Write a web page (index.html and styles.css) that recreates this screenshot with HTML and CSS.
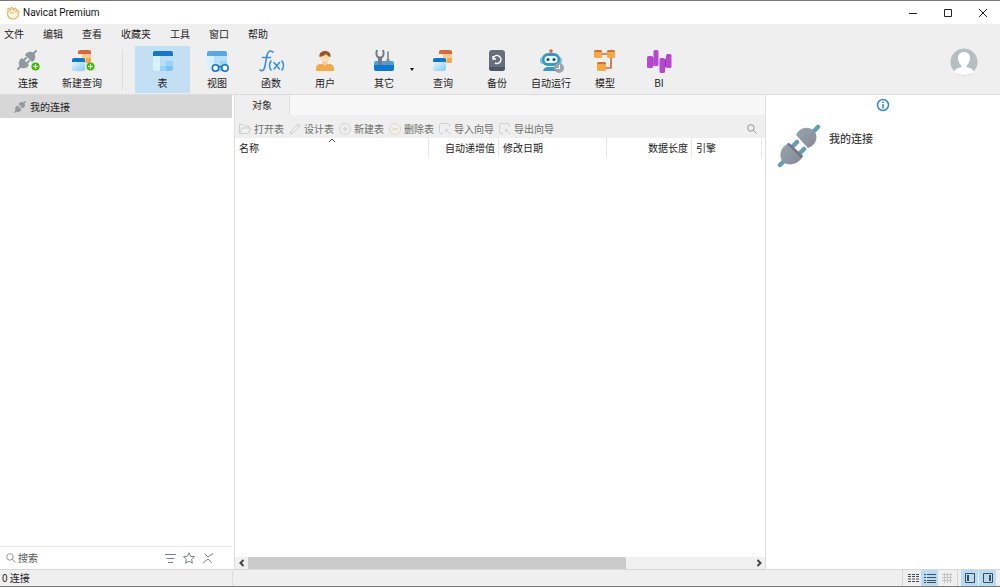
FILE: index.html
```html
<!DOCTYPE html>
<html lang="zh-CN">
<head>
<meta charset="utf-8">
<title>Navicat Premium</title>
<link rel="stylesheet" href="styles.css">
</head>
<body>
<svg class="defs" aria-hidden="true">
  <defs>
    <linearGradient id="pale" x1="0" y1="0" x2="1" y2="1"><stop offset="0" stop-color="#e6f5ff"/><stop offset="1" stop-color="#85c9fa"/></linearGradient>
    <linearGradient id="slate" x1="0" y1="0" x2="1" y2="1"><stop offset="0" stop-color="#98a6b0"/><stop offset="1" stop-color="#858796"/></linearGradient>
    <symbol id="plug" viewBox="0 0 44 44">
      <path d="M3 41L9 35M41 3L35 9M20 18L15 23M27 25L22 30" stroke="currentColor" stroke-width="4.500" stroke-linecap="round"/>
      <path d="M12 19L26 32C22 40 12 43 6 38C1 32 3 23 12 19Z" fill="url(#slate)"/>
      <path d="M12 19L26 32L24 34L10 20Z" fill="#777483"/>
      <path d="M19 11L31 24C39 21 42 13 37 7C31 1 22 4 19 11Z" fill="url(#slate)"/>
    </symbol>
    <symbol id="plug-flat" viewBox="0 0 20 20">
      <path d="M1 19L4 16M19 1L16 4M9 8L7 10M12 11L10 13" stroke="#8f999e" stroke-width="2" stroke-linecap="round"/>
      <path d="M5 8L12 15C10 19 5 19 3 17C1 14 1.500 10 5 8ZM8 5L15 12C19 10 19 6 17 3C14 1 10 1.500 8 5Z" fill="#8f999e"/>
    </symbol>
    <symbol id="plus" viewBox="0 0 10 10">
      <circle cx="5" cy="5" r="4.500" fill="#40bb08"/><path d="M5 2.500V7.500M2.500 5H7.500" stroke="#fff" stroke-width="1.300"/>
    </symbol>
    <symbol id="query" viewBox="0 0 30 26">
      <path d="M11 4a2 2 0 0 1 2-2h9a2 2 0 0 1 2 2v2H11z" fill="#d9683a"/>
      <path d="M15 6h9v7a2 2 0 0 1-2 2h-7z" fill="#f8ca93"/><path d="M19 10h5v3a2 2 0 0 1-2 2h-3z" fill="#efa94f"/>
      <path d="M5 12a2 2 0 0 1 2-2h9a2 2 0 0 1 2 2v2H5z" fill="#0d78c9"/>
      <path d="M5 14h13v7a2 2 0 0 1-2 2H7a2 2 0 0 1-2-2z" fill="url(#pale)"/>
    </symbol>
    <symbol id="table-body" viewBox="0 0 30 26">
      <path d="M5 7h20v13a3 3 0 0 1-3 3H8a3 3 0 0 1-3-3z" fill="#d9f0fe"/>
      <path d="M12 8h13v12a3 3 0 0 1-3 3h-4v-5h-6z" fill="#b9e0fb"/>
      <path d="M18 13h7v7a3 3 0 0 1-3 3H12v-5h6z" fill="#97d2f9"/>
      <path d="M18 18h7v2a3 3 0 0 1-3 3h-4z" fill="#79c3f7"/>
    </symbol>
    <symbol id="wizard" viewBox="0 0 12 12">
      <path d="M4 10.500H2a1.500 1.500 0 0 1-1.500-1.500V2A1.500 1.500 0 0 1 2 .5h7A1.500 1.500 0 0 1 10.500 2v2M6.500 6.500l5 5M6.500 9V6.500H9" fill="none" stroke="#cfd2d2"/>
    </symbol>
    <symbol id="search" viewBox="0 0 12 12">
      <circle cx="4.700" cy="4.700" r="3.900" fill="none" stroke="currentColor"/><path d="M7.500 7.500L11.500 11.500" stroke="currentColor"/>
    </symbol>
  </defs>
</svg>
<div class="window">
  <header class="titlebar">
    <svg class="logo" viewBox="0 0 14 14"><path d="M2.500 5.500C.5 7 1.500 12.300 6 13C10.500 13.500 13 10 12 7.500C11 5.500 9 6.500 7 7C5 7.500 4.500 5 2.500 5.500Z" fill="#fff8e9" stroke="#e9b45e" stroke-width="1.200"/><path d="M2.500 5.500C.5 2.500 3 1.500 4.500 4.800C4 .5 7 .3 7.500 4.800C8.500 1 11 1.500 10 5.300C12.500 3.500 13.500 5.500 12 7.500" fill="#fff8e9" stroke="#e9b45e" stroke-width="1.200"/></svg>
    <h1 class="title">Navicat Premium</h1>
    <div class="window-controls">
      <button class="control" aria-label="最小化"><svg viewBox="0 0 10 10"><path d="M1 5.500H9"/></svg></button>
      <button class="control" aria-label="最大化"><svg viewBox="0 0 10 10"><path d="M1.500 1.500H8.500V8.500H1.500Z"/></svg></button>
      <button class="control" aria-label="关闭"><svg viewBox="0 0 10 10"><path d="M1 1L9 9M9 1L1 9"/></svg></button>
    </div>
  </header>

  <div class="ribbon">
    <nav class="menu">
      <button>文件</button><button>编辑</button><button>查看</button><button>收藏夹</button><button>工具</button><button>窗口</button><button>帮助</button>
    </nav>
    <div class="toolbar">
      <button class="tool"><svg class="icon" viewBox="0 0 30 26"><use href="#plug-flat" x="4" y="2" width="20" height="20"/><use href="#plus" x="18" y="14" width="9" height="9"/></svg>连接</button>
      <button class="tool"><svg class="icon" viewBox="0 0 30 26"><use href="#query" width="30" height="26"/><use href="#plus" x="19" y="14" width="9" height="9"/></svg>新建查询</button>
      <span class="divider"></span>
      <button class="tool active"><svg class="icon" viewBox="0 0 30 26"><use href="#table-body" width="30" height="26"/><path d="M5 5a2 2 0 0 1 2-2h16a2 2 0 0 1 2 2v3H5z" fill="#1378c8"/></svg>表</button>
      <button class="tool"><svg class="icon" viewBox="0 0 30 26"><use href="#table-body" width="30" height="26"/><path d="M5 5a2 2 0 0 1 2-2h16a2 2 0 0 1 2 2v3H5z" fill="#5ba6e4"/><g fill="#fff" stroke="#1475bf" stroke-width="1.500"><circle cx="13.500" cy="20" r="3.200"/><circle cx="23" cy="20" r="3.200"/><path d="M16.700 19q1.500-1 3 0"/></g></svg>视图</button>
      <button class="tool"><svg class="icon" viewBox="0 0 30 26"><g fill="none" stroke="#3b90df" stroke-width="1.600" stroke-linecap="round"><path d="M17 4C13.500 1.500 11.500 4 10.800 8L9 18C8.300 22 6.500 23.500 4 22M6.500 9.500H14.500"/><path d="M15 13q-3 4.500 0 9M26 13q3 4.500 0 9M18 14.500L23.500 21M23.500 14.500L18 21"/></g></svg>函数</button>
      <button class="tool"><svg class="icon" viewBox="0 0 30 26"><path d="M6 23v-2q0-5 5-5h8q5 0 5 5v2z" fill="#f4aa4b"/><path d="M12.500 12h5v4q-2.500 3-5 0z" fill="#f7cc98"/><circle cx="15" cy="9" r="5" fill="#ffdcb1"/><path d="M9.500 9C8 1 22 1 20.500 9C18 8.500 17 7 16 6C14 8 12 8 9.500 9Z" fill="#9b5520"/></svg>用户</button>
      <button class="tool split"><svg class="icon" viewBox="0 0 30 26"><path d="M5 15a2 2 0 0 1 2-2h16a2 2 0 0 1 2 2v4H5z" fill="#46a1e8"/><path d="M8 2C6.500 7 8 9 10 10V18M14 2c1.500 5 0 7-2 8V18" fill="none" stroke="#777b86" stroke-width="2"/><path d="M9 8.500h4V18H9.500z" fill="#777b86"/><path d="M19 3.500V12" stroke="#858993" stroke-width="1.700"/><path d="M17.500 11h3v7h-3z" fill="#858993"/><path d="M5 17h20v4a2 2 0 0 1-2 2H7a2 2 0 0 1-2-2z" fill="#0e78ca"/></svg>其它<span class="caret"></span></button>
      <button class="tool"><svg class="icon" viewBox="0 0 30 26"><use href="#query" width="30" height="26"/></svg>查询</button>
      <button class="tool"><svg class="icon" viewBox="0 0 30 26"><rect x="7" y="2" width="16" height="21" rx="3" fill="#686d7c"/><path d="M7 19h16v1a3 3 0 0 1-3 3H10a3 3 0 0 1-3-3z" fill="#505566"/><path d="M11.500 9.500A4 4 0 1 1 13 15M11 8v3h3" fill="none" stroke="#fff" stroke-width="1.500"/></svg>备份</button>
      <button class="tool"><svg class="icon" viewBox="0 0 30 26"><path d="M15 3v4" stroke="#d9683a" stroke-width="1.500"/><circle cx="15" cy="3" r="1.800" fill="#d9683a"/><rect x="4" y="9" width="22" height="7" rx="3" fill="#7bc3dd"/><rect x="6" y="5" width="18" height="13" rx="6" fill="#3999bd"/><rect x="8.500" y="8" width="13" height="7" rx="3.500" fill="#e9fbff"/><circle cx="12" cy="11.500" r="1.500" fill="#16476d"/><circle cx="18" cy="11.500" r="1.500" fill="#16476d"/><path d="M7 23q1-4 5-4h7q3 0 4 4z" fill="#3999bd"/><circle cx="23" cy="20" r="5" fill="#9da3aa"/><path d="M23.500 17v3.500h-3" fill="none" stroke="#fff"/></svg>自动运行</button>
      <button class="tool"><svg class="icon" viewBox="0 0 30 26"><path d="M11 6h10M21 8v12h-6" fill="none" stroke="#d86b38" stroke-width="1.700"/><g fill="#f4a944"><rect x="4" y="2" width="8" height="8" rx="1.500"/><rect x="17" y="2" width="8" height="8" rx="1.500"/><rect x="7" y="14" width="9" height="9" rx="1.500"/></g><path d="M4 4q0-2 2-2h4q2 0 2 2zM17 4q0-2 2-2h4q2 0 2 2zM7 16q0-2 2-2h5q2 0 2 2z" fill="#d86b38"/></svg>模型</button>
      <button class="tool"><svg class="icon" viewBox="0 0 30 26"><g fill="#b848d2"><rect x="3" y="8" width="6" height="12" rx="1.500"/><rect x="9.500" y="2" width="5" height="16" rx="1.500"/><rect x="15.500" y="10" width="5.500" height="15" rx="1.500"/><rect x="22" y="6" width="5.500" height="14" rx="1.500"/></g><path d="M8.500 9h1v9h-1zM21 11h1v8h-1z" fill="#9a34b5"/></svg>BI</button>
      <button class="avatar" aria-label="用户"><svg viewBox="0 0 28 28"><circle cx="14" cy="14" r="13.500" fill="#b5bfc0"/><path d="M14 4c-4 0-6.500 3-6 7c.3 2 1.500 5 3.500 7v1C8 20 5 21 4 23.500Q14 31 24 23.500C23 21 20 20 16.500 19v-1c2-2 3.200-5 3.500-7C20.500 7 18 4 14 4Z" fill="#fff"/></svg></button>
    </div>
  </div>

  <main class="workspace">
    <aside class="sidebar">
      <button class="connection"><svg class="plug-small"><use href="#plug-flat"/></svg>我的连接</button>
      <div class="search-row">
        <svg class="small-icon"><use href="#search"/></svg>
        <input class="search" type="text" placeholder="搜索" aria-label="搜索">
        <button class="mini" aria-label="筛选"><svg viewBox="0 0 12 12"><path d="M1 2.500H12M2.500 6.500H10.500M4 10.500H9"/></svg></button>
        <button class="mini" aria-label="收藏"><svg viewBox="0 0 12 12"><path d="M6 .8L7.600 4.300L11.500 4.700L8.600 7.300L9.400 11.200L6 9.200L2.600 11.200L3.400 7.300L.5 4.700L4.400 4.300Z"/></svg></button>
        <button class="mini" aria-label="折叠"><svg viewBox="0 0 12 12"><path d="M2.500 1.500L6 5L11 1.500M1 11L6 7L9.500 10.500"/></svg></button>
      </div>
    </aside>

    <section class="objects">
      <div class="tabs"><button class="tab">对象</button></div>
      <div class="actions">
        <button class="action"><svg viewBox="0 0 12 12"><path d="M.5 10.500V1.500H4L5.500 3H10V5M.5 10.500L3 5H11.500L9.500 10.500Z" fill="none" stroke="#cbcece"/></svg>打开表</button>
        <button class="action"><svg viewBox="0 0 12 12"><path d="M1 11L2 8L8.500 1.500Q10 .5 11 2L10.500 3.500L4 10ZM7.500 2.500L9.500 4.500" fill="none" stroke="#cbcece"/></svg>设计表</button>
        <button class="action"><svg viewBox="0 0 12 12"><path d="M6 3.500V8.500M3.500 6H8.500" stroke="#c9cdcd"/><circle cx="6" cy="6" r="5.500" fill="none" stroke="#cfd2d2"/></svg>新建表</button>
        <button class="action"><svg viewBox="0 0 12 12"><path d="M3.500 6H8.500" stroke="#dcc98e"/><circle cx="6" cy="6" r="5.500" fill="none" stroke="#e2d8b8"/></svg>删除表</button>
        <button class="action"><svg><use href="#wizard"/></svg>导入向导</button>
        <button class="action"><svg><use href="#wizard"/></svg>导出向导</button>
        <button class="find" aria-label="查找"><svg class="small-icon"><use href="#search"/></svg></button>
      </div>
      <div class="list">
        <table class="grid">
          <colgroup><col class="c-name"><col class="c-auto"><col class="c-date"><col class="c-size"><col class="c-engine"><col></colgroup>
          <thead><tr><th>名称<svg class="sort" viewBox="0 0 8 5"><path d="M1 4L4 1L7 4"/></svg></th><th class="num">自动递增值</th><th>修改日期</th><th class="num">数据长度</th><th>引擎</th><th class="filler"></th></tr></thead>
        </table>
      </div>
      <div class="scrollbar">
        <button aria-label="向左"><svg viewBox="0 0 8 8"><path d="M5.500 1L2.500 4L5.500 7"/></svg></button>
        <div class="track"><div class="thumb"></div></div>
        <button aria-label="向右"><svg viewBox="0 0 8 8"><path d="M2.500 1L5.500 4L2.500 7"/></svg></button>
      </div>
    </section>

    <aside class="info">
      <button class="info-tab" aria-label="信息"><svg viewBox="0 0 14 14"><circle cx="7" cy="7" r="5.500"/><path d="M7 6V10.500M7 3.500V5"/></svg></button>
      <div class="summary"><svg class="plug-large"><use href="#plug"/></svg><h2>我的连接</h2></div>
    </aside>
  </main>

  <footer class="status">
    <span class="count">0 连接</span>
    <div class="views">
      <button class="view" aria-label="列表"><svg viewBox="0 0 12 12"><path d="M1 2.500H12M1 4.500H12M1 7H12M1 9.500H12" stroke-dasharray="3 1"/></svg></button>
      <button class="view on" aria-label="详细信息"><svg viewBox="0 0 12 12"><path d="M0 2.500H2M0 5.500H2M0 8.500H2M0 10.500H2M3 2.500H12M3 5.500H12M3 8.500H12M3 10.500H12"/></svg></button>
      <button class="view faint" aria-label="ER 图表"><svg viewBox="0 0 12 12"><path d="M1 2.500H11M1 5.500H11M1 8.500H11M3.500 1V11M6.500 1V11M9.500 1V11"/></svg></button>
    </div>
    <div class="views panes">
      <button class="view on" aria-label="左窗格"><svg viewBox="0 0 12 12"><path d="M1.500 1.500H10.500V10.500H1.500Z"/><path d="M4 3V9" stroke-width="2"/></svg></button>
      <button class="view on" aria-label="右窗格"><svg viewBox="0 0 12 12"><path d="M1.500 1.500H10.500V10.500H1.500Z"/><path d="M8 3V9" stroke-width="2"/></svg></button>
    </div>
  </footer>
</div>
</body>
</html>
```
FILE: styles.css
```css
* { box-sizing: border-box; }
body {
  margin: 0;
  font: 10px/14px "Noto Sans CJK SC", sans-serif;
  color: #1c1c1c;
  background: #fff;
}
button, input {
  margin: 0;
  padding: 0;
  border: 0;
  background: none;
  font: inherit;
  color: inherit;
}
svg { display: block; flex: none; }
.defs { position: absolute; width: 0; height: 0; }
.window {
  display: flex;
  flex-direction: column;
  height: 100vh;
  border-top: 1px solid #777;
  border-bottom: 1px solid #777;
}

.titlebar { display: flex; align-items: center; height: 23px; padding-left: 6px; gap: 3px; }
.logo { width: 14px; height: 14px; }
.title { flex: 1; margin: 0; font: 10px/14px Roboto, sans-serif; color: #111; }
.window-controls { display: flex; }
.control { display: grid; place-items: center; width: 35px; height: 23px; }
.control svg { width: 10px; height: 10px; fill: none; stroke: #222; }

.ribbon { background: #efefef; border-bottom: 1px solid #dcdcdc; }
.menu { display: flex; gap: 19px; height: 20px; padding-left: 4px; }
.toolbar { display: flex; height: 50px; padding: 2px 22px 0 1px; }
.tool {
  display: flex;
  flex-direction: column;
  align-items: center;
  width: 54px;
  height: 47px;
  padding-top: 2px;
  gap: 2px;
}
.icon { width: 30px; height: 26px; }
.active { width: 55px; background: #c3dff4; }
.split { position: relative; width: 64px; }
.caret {
  position: absolute;
  right: 2px;
  top: 22px;
  border: 2px solid transparent;
  border-top: 3px solid #111;
}
.divider { width: 1px; height: 40px; margin: 4px 12px 0 13px; background: #dcdcdc; }
.avatar { align-self: flex-start; margin-left: auto; }
.avatar svg { width: 28px; height: 28px; margin-top: 2px; }

.workspace { display: flex; flex: 1; min-height: 0; }
.sidebar {
  display: flex;
  flex-direction: column;
  justify-content: space-between;
  width: 235px;
  padding-right: 2px;
  border-right: 1px solid #dedede;
}
.connection { display: flex; align-items: center; gap: 4px; height: 23px; padding-left: 14px; background: #d7d7d7; }
.plug-small { width: 12px; height: 12px; }
.search-row { display: flex; align-items: center; height: 23px; padding: 0 18px 0 6px; border-top: 1px solid #e6e6e6; }
.small-icon { width: 10px; height: 10px; color: #7b8385; }
.search { flex: 1; min-width: 0; margin-left: 2px; outline: 0; }
.search::placeholder { color: #555; opacity: 1; }
.mini { margin-left: 7px; }
.mini svg { width: 12px; height: 12px; fill: none; stroke: #748083; }

.objects { display: flex; flex: 1; flex-direction: column; min-width: 0; border-right: 1px solid #dedede; }
.tabs { height: 20px; background: #f7f7f7; }
.tab { width: 55px; height: 20px; background: #efefef; border-right: 1px solid #e2e2e2; }
.actions { display: flex; align-items: center; gap: 5px; height: 23px; padding: 4px 8px 0 4px; background: #efefef; }
.action { display: flex; align-items: center; gap: 3px; color: #6d706b; white-space: nowrap; }
.action svg { width: 12px; height: 12px; }
.find { margin-left: auto; }
.list { flex: 1; min-height: 0; overflow: hidden; }
.grid { width: 100%; table-layout: fixed; border-collapse: separate; border-spacing: 0; }
.grid th { position: relative; height: 20px; padding: 0 4px; border-right: 1px solid #e8e8e8; font-weight: 400; text-align: left; }
.grid .num { padding-right: 3px; text-align: right; }
.grid .filler { padding: 0; border: 0; }
.c-name { width: 194px; }
.c-auto { width: 70px; }
.c-date { width: 108px; }
.c-size { width: 85px; }
.c-engine { width: 70px; }
.sort { position: absolute; left: 48%; top: 0; width: 8px; height: 5px; fill: none; stroke: #555; }
.scrollbar { display: flex; height: 12px; background: #f0f0f0; }
.scrollbar button { display: grid; place-items: center; width: 13px; }
.scrollbar svg { width: 8px; height: 8px; fill: none; stroke: #444; stroke-width: 2; }
.track { flex: 1; }
.thumb { width: 75%; height: 12px; background: #cbcbcb; }

.info { width: 234px; }
.info-tab { display: block; margin: 3px auto 0; }
.info-tab svg { width: 14px; height: 14px; fill: none; stroke: #2e88d5; stroke-width: 1.5; }
.summary { display: flex; align-items: flex-start; gap: 8px; padding: 12px 11px; }
.plug-large { width: 44px; height: 44px; color: #609db8; }
.summary h2 { margin: 6px 0 0; font-size: 11px; line-height: 16px; font-weight: 500; color: #404040; }

.status { display: flex; align-items: center; height: 17px; padding-right: 4px; background: #efefef; border-top: 1px solid #d8d8d8; }
.count { width: 233px; padding-left: 2px; border-right: 1px solid #dcdcdc; }
.views { display: flex; margin-left: auto; padding-left: 1px; border-left: 1px solid #d5d5d5; }
.panes { margin-left: 2px; padding-left: 3px; gap: 1px; }
.view { display: grid; place-items: center; width: 17px; height: 16px; }
.view svg { width: 12px; height: 12px; fill: none; stroke: #424c54; }
.on { background: #b9dcf4; }
.faint svg { stroke: #c3c3c3; }
```
